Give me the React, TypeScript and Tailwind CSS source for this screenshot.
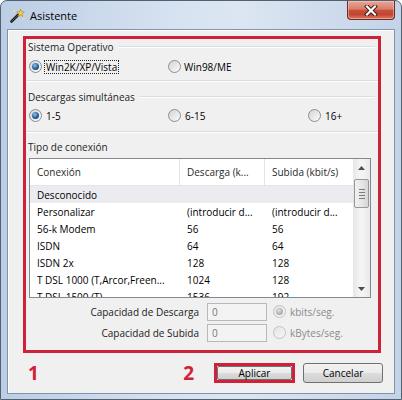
import React from 'react';

function Radio({ checked = false, disabled = false }: { checked?: boolean; disabled?: boolean }) {
  return (
    <span
      className={
        disabled
          ? 'flex h-[13px] w-[13px] shrink-0 items-center justify-center rounded-full border border-[#c2c2c2] bg-[linear-gradient(135deg,#e4e4e4,#f7f7f7)]'
          : 'flex h-[13px] w-[13px] shrink-0 items-center justify-center rounded-full border border-[#8a8d92] bg-[linear-gradient(135deg,#d4d4d4,#fbfbfb)]'
      }
    >
      {checked && (
        <span
          className={
            disabled
              ? 'h-[7px] w-[7px] rounded-full bg-[radial-gradient(circle_at_40%_35%,#e0e0e0,#a9a9a9_70%)]'
              : 'h-[7px] w-[7px] rounded-full bg-[radial-gradient(circle_at_40%_35%,#8ec6ee,#245f95_55%,#123760)]'
          }
        />
      )}
    </span>
  );
}

function Etched() {
  return <div className="h-[2px] w-full border-t border-[#d6dde3] bg-white" />;
}

const rows: [string, string, string][] = [
  ['Personalizar', '(introducir d...', '(introducir d...'],
  ['56-k Modem', '56', '56'],
  ['ISDN', '64', '64'],
  ['ISDN 2x', '128', '128'],
  ['T DSL 1000 (T,Arcor,Freen...', '1024', '128'],
  ['T DSL 1500 (T)', '1536', '192'],
];

export default function App() {
  return (
    <div className="relative flex h-[400px] w-[402px] flex-col overflow-hidden rounded-t-[7px] border border-[#52606f] bg-[linear-gradient(90deg,#bccee5,#d7e3f1_45%,#dce6f2_60%,#c3d3e8)] font-['Open_Sans','Noto_Sans',sans-serif] text-[10px] text-black">
      {/* Title bar */}
      <div className="flex h-[28px] shrink-0 items-center">
        <svg className="ml-[9px] mt-[1px]" width="15" height="15" viewBox="0 0 15 15">
          <line x1="1.5" y1="13.5" x2="8" y2="7" stroke="#1a1a1a" strokeWidth="2.6" strokeLinecap="round" />
          <line x1="1.5" y1="13.5" x2="8" y2="7" stroke="#6a6a6a" strokeWidth="0.8" strokeLinecap="round" />
          <path d="M10.5 1 L11.4 3.8 L14.3 4 L12 5.8 L12.8 8.6 L10.5 7 L8.2 8.6 L9 5.8 L6.7 4 L9.6 3.8 Z" fill="#f4d24a" stroke="#b08a1c" strokeWidth="0.6" />
          <circle cx="4" cy="3" r="1" fill="#f7e27a" />
          <circle cx="13.5" cy="10.5" r="0.9" fill="#f7e27a" />
        </svg>
        <span className="ml-[5px] text-[11px] leading-none text-black">Asistente</span>
        <div className="ml-auto mr-[6px] flex h-[19px] w-[48px] items-center justify-center self-start rounded-b-[4px] border border-t-0 border-[#6e2a24] bg-[linear-gradient(180deg,#e9a797_0%,#da7d69_45%,#c6503b_52%,#c1452f_75%,#dc7c64_100%)] shadow-[inset_0_0_0_1px_rgba(255,220,210,0.45)]">
          <svg width="14" height="11" viewBox="0 0 14 11">
            <path d="M3 1.5 L11 9.5 M11 1.5 L3 9.5" stroke="#3a1511" strokeWidth="4" strokeLinecap="square" />
            <path d="M3 1.5 L11 9.5 M11 1.5 L3 9.5" stroke="#ffffff" strokeWidth="2.2" strokeLinecap="square" />
          </svg>
        </div>
      </div>

      {/* Client area */}
      <div className="mx-[6px] mb-[5px] flex flex-1 flex-col border border-[#8494a8] bg-[#f0f0f0] shadow-[inset_1px_1px_0_#ffffff]">
        {/* Red box */}
        <div className="ml-[15px] mt-[6px] flex h-[317px] w-[358px] flex-col border-[3px] border-[#d0213b]">
          {/* Section 1 */}
          <div className="flex h-[16px] items-center pl-[2px]">
            <span className="leading-none text-[#1e1e1e]">Sistema Operativo</span>
            <div className="ml-[4px] mr-[3px] flex-1">
              <Etched />
            </div>
          </div>
          <div className="mt-[3px] flex h-[17px] items-center pl-[3px]">
            <div className="flex w-[139px] items-center">
              <Radio checked />
              <span className="ml-[2px] border border-dotted border-[#222] px-[1px] py-[1px] leading-none">Win2K/XP/Vista</span>
            </div>
            <div className="flex w-[140px] items-center">
              <Radio />
              <span className="ml-[3px] leading-none">Win98/ME</span>
            </div>
          </div>
          <div className="mt-[5px]">
            <Etched />
          </div>

          {/* Section 2 */}
          <div className="mt-[7px] flex h-[16px] items-center pl-[2px]">
            <span className="leading-none text-[#1e1e1e]">Descargas simultáneas</span>
            <div className="ml-[4px] mr-[3px] flex-1">
              <Etched />
            </div>
          </div>
          <div className="mt-[2px] flex h-[17px] items-center pl-[3px]">
            <div className="flex w-[139px] items-center">
              <Radio checked />
              <span className="ml-[4px] leading-none">1-5</span>
            </div>
            <div className="flex w-[140px] items-center">
              <Radio />
              <span className="ml-[4px] leading-none">6-15</span>
            </div>
            <div className="flex items-center">
              <Radio />
              <span className="ml-[4px] leading-none">16+</span>
            </div>
          </div>
          <div className="mt-[7px]">
            <Etched />
          </div>

          {/* Section 3 */}
          <div className="mt-[6px] flex h-[16px] items-center pl-[2px]">
            <span className="leading-none text-[#1e1e1e]">Tipo de conexión</span>
          </div>

          {/* List */}
          <div className="ml-[3px] mt-[3px] flex h-[140px] w-[342px] overflow-hidden border border-[#828790] bg-white">
            <div className="flex flex-1 flex-col overflow-hidden">
              <div className="flex h-[27px] shrink-0 items-center border-b border-[#e5e5e5] bg-white text-[#2a2a2a]">
                <div className="flex h-full w-[150px] items-center border-r border-[#e3e3e3] pl-[7px]">Conexión</div>
                <div className="flex h-full w-[85px] items-center border-r border-[#e3e3e3] pl-[7px] whitespace-nowrap">Descarga (k...</div>
                <div className="flex h-full flex-1 items-center pl-[7px] whitespace-nowrap">Subida (kbit/s)</div>
              </div>
              <div className="flex h-[17px] shrink-0 items-center bg-[#ececf0]">
                <div className="w-[150px] pl-[7px] leading-none">Desconocido</div>
              </div>
              {rows.map((r, i) => (
                <div key={i} className="flex h-[17px] shrink-0 items-center whitespace-nowrap">
                  <div className="w-[150px] pl-[7px] leading-none">{r[0]}</div>
                  <div className="w-[85px] pl-[7px] leading-none">{r[1]}</div>
                  <div className="flex-1 pl-[7px] leading-none">{r[2]}</div>
                </div>
              ))}
            </div>
            {/* Scrollbar */}
            <div className="flex w-[17px] shrink-0 flex-col bg-[linear-gradient(90deg,#e6e6e6,#f4f4f4_40%,#f4f4f4_60%,#e8e8e8)]">
              <div className="flex h-[17px] items-center justify-center">
                <svg width="7" height="4" viewBox="0 0 7 4">
                  <path d="M0 4 L3.5 0 L7 4 Z" fill="#4d4d4d" />
                </svg>
              </div>
              <div className="mx-[1px] mt-[3px] flex h-[29px] flex-col items-center justify-center gap-[2px] rounded-[2px] border border-[#979797] bg-[linear-gradient(90deg,#f2f2f2,#e6e6e6_50%,#d6d6d6)]">
                <div className="h-px w-[6px] bg-[#7a7a7a]" />
                <div className="h-px w-[6px] bg-[#7a7a7a]" />
                <div className="h-px w-[6px] bg-[#7a7a7a]" />
                <div className="h-px w-[6px] bg-[#7a7a7a]" />
              </div>
              <div className="flex-1" />
              <div className="flex h-[17px] items-center justify-center">
                <svg width="7" height="4" viewBox="0 0 7 4">
                  <path d="M0 0 L3.5 4 L7 0 Z" fill="#4d4d4d" />
                </svg>
              </div>
            </div>
          </div>

          {/* Capacity rows */}
          <div className="mt-[5px] flex h-[17px] items-center">
            <div className="w-[174px] pr-[1px] text-right leading-none text-[#222]">Capacidad de Descarga</div>
            <div className="ml-[7px] flex h-[18px] w-[60px] items-center border border-[#b9b9b9] bg-[#f3f3f3] pl-[4px] leading-none text-[#777]">0</div>
            <div className="ml-[6px] flex items-center">
              <Radio checked disabled />
              <span className="ml-[4px] leading-none text-[#8a8a8a]">kbits/seg.</span>
            </div>
          </div>
          <div className="mt-[4px] flex h-[17px] items-center">
            <div className="w-[174px] pr-[1px] text-right leading-none text-[#222]">Capacidad de Subida</div>
            <div className="ml-[7px] flex h-[18px] w-[60px] items-center border border-[#b9b9b9] bg-[#f3f3f3] pl-[4px] leading-none text-[#777]">0</div>
            <div className="ml-[6px] flex items-center">
              <Radio disabled />
              <span className="ml-[4px] leading-none text-[#8a8a8a]">kBytes/seg.</span>
            </div>
          </div>
        </div>

        {/* Bottom row */}
        <div className="mt-[10px] flex h-[20px] items-center">
          <span className="ml-[20px] text-[19px] font-bold leading-none text-[#d0213b]">1</span>
          <span className="ml-auto text-[19px] font-bold leading-none text-[#d0213b]">2</span>
          <div className="ml-[20px] flex h-[20px] w-[81px] border-[3px] border-[#d0213b]">
            <div className="flex flex-1 items-center justify-center rounded-[2px] border border-[#707070] bg-[linear-gradient(180deg,#f2f2f2_0%,#ebebeb_50%,#dddddd_50%,#cfcfcf_100%)] leading-none">
              Aplicar
            </div>
          </div>
          <div className="ml-[8px] mr-[11px] flex h-[20px] w-[80px] items-center justify-center rounded-[3px] border border-[#707070] bg-[linear-gradient(180deg,#f2f2f2_0%,#ebebeb_50%,#dddddd_50%,#cfcfcf_100%)] leading-none">
            Cancelar
          </div>
        </div>
      </div>
    </div>
  );
}
